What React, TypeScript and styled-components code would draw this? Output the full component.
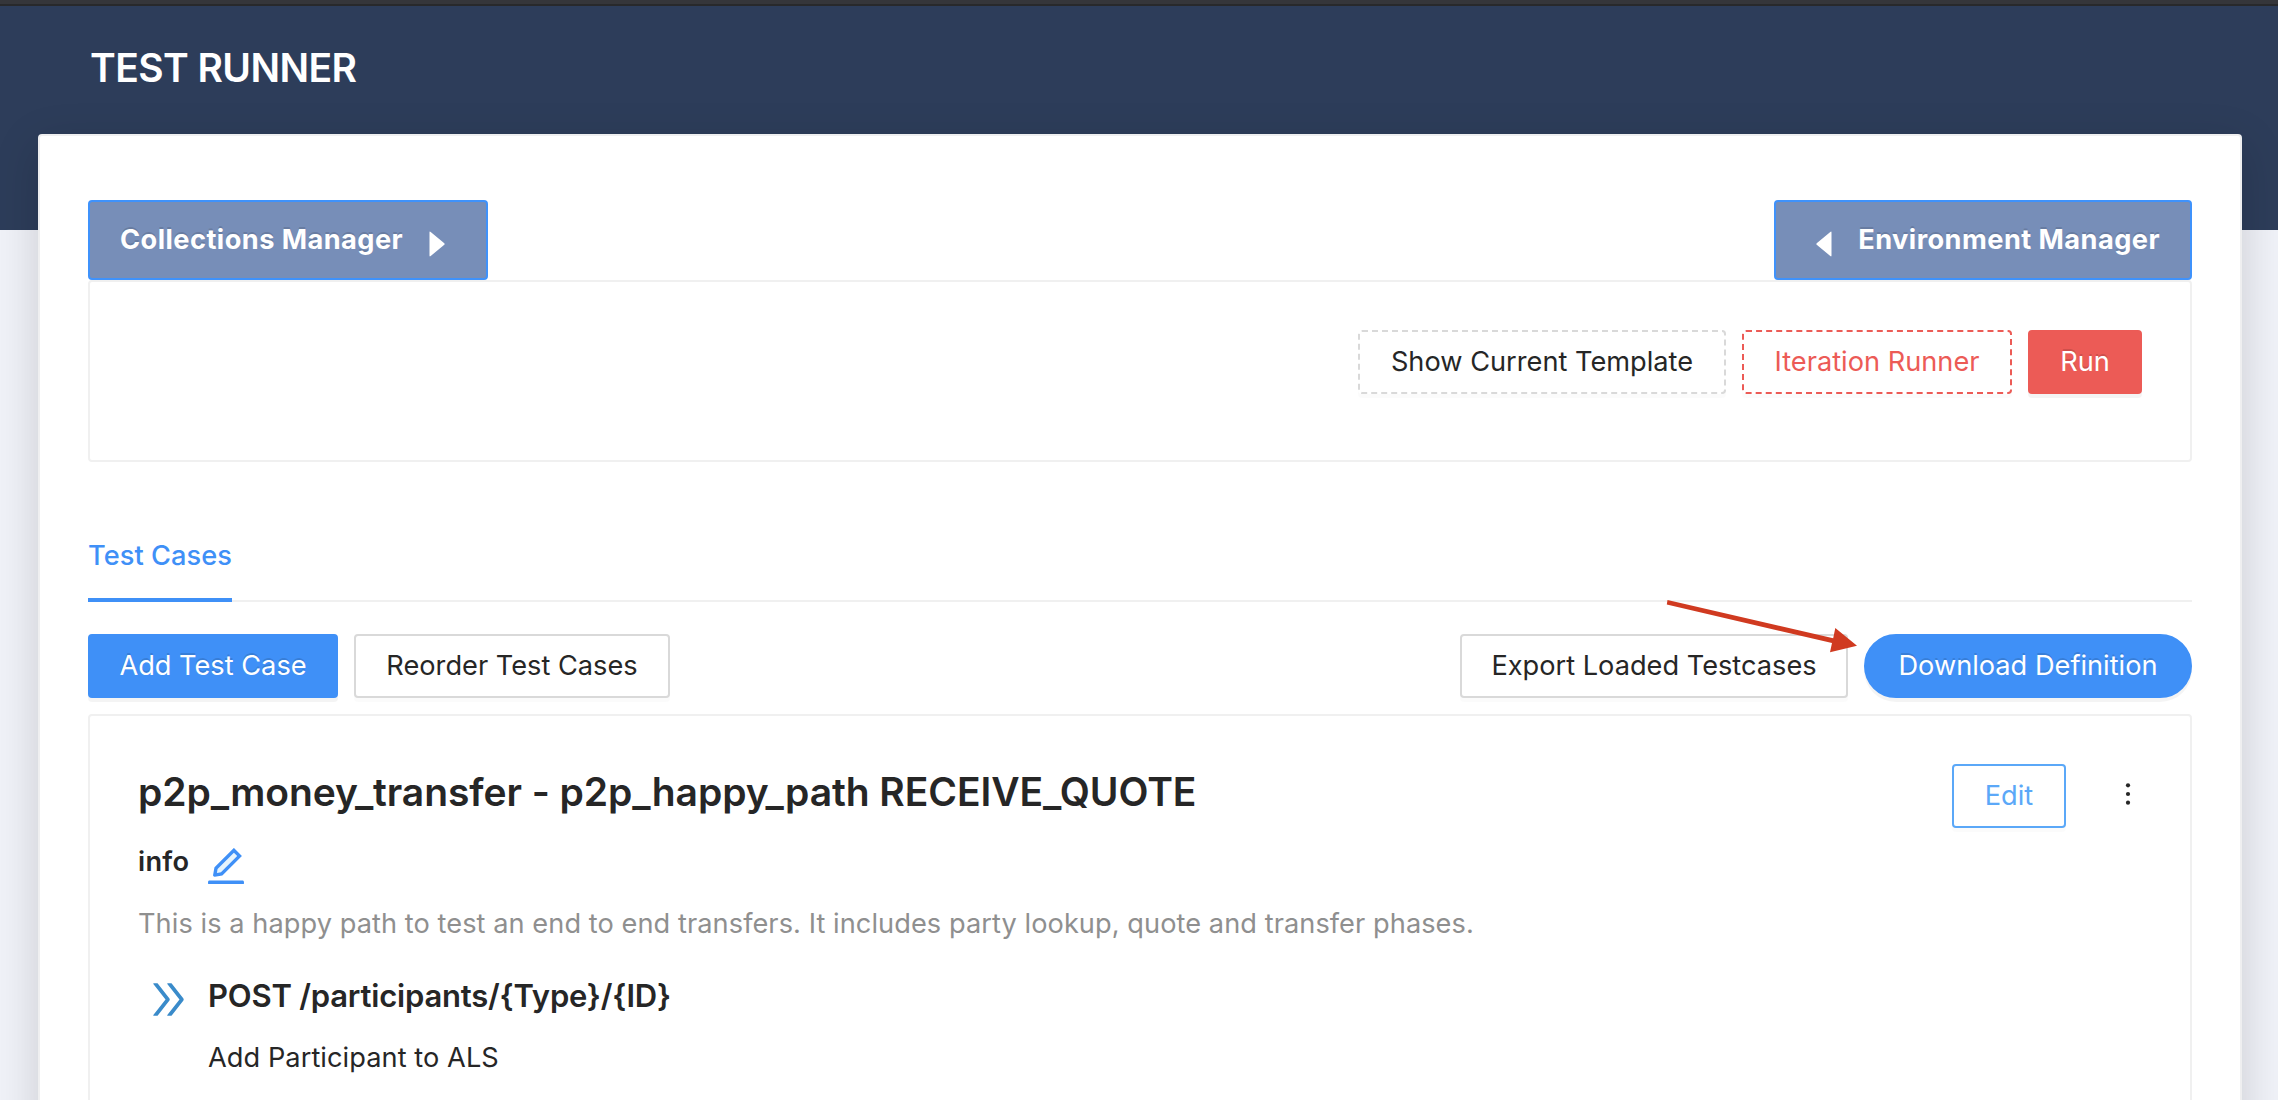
import React from "react";
import styled, { createGlobalStyle, css } from "styled-components";
import { AiOutlineDoubleRight, AiTwotoneEdit } from "react-icons/ai";

const color = {
  primary: "#3f90f7",
  danger: "#ec5b56",
  text: "#262626",
  muted: "#8f8f8f",
  line: "#f0f0f0",
  navy: "#2d3d5a",
};

const GlobalStyle = createGlobalStyle`
  *, *::before, *::after { box-sizing: border-box; }
  body {
    margin: 0;
    background: #f0f2f8;
    color: ${color.text};
    font-family: Inter, "Liberation Sans", sans-serif;
    font-size: 27.2px;
    line-height: 44px;
    letter-spacing: 0.06px;
  }
`;

const Page = styled.div`
  height: 1100px;
  overflow: hidden;
`;

const BrowserEdge = styled.div`
  height: 6px;
  background: #35363a;
  border-bottom: 2px solid #28292b;
`;

const Header = styled.header`
  height: 224px;
  padding: 36px 90px 0;
  background: ${color.navy};
`;

const PageTitle = styled.h1`
  margin: 0;
  color: #fff;
  font-size: 39px;
  font-weight: 600;
  line-height: 52px;
  letter-spacing: -0.58px;
`;

const Sheet = styled.main`
  position: relative;
  height: 1100px;
  margin: -96px 36px 0 38px;
  padding: 64px 48px 0;
  background: #fff;
  border: 2px solid #efeff0;
  border-radius: 4px;
  box-shadow: 0 12px 46px rgba(0, 0, 0, 0.16);
`;

const Row = styled.div<{ $gap?: number; $between?: boolean }>`
  display: flex;
  align-items: flex-start;
  justify-content: ${(p) => (p.$between ? "space-between" : "flex-start")};
  gap: ${(p) => p.$gap ?? 0}px;
`;

const ManagerButton = styled.button<{ $width: number; $end?: boolean }>`
  display: flex;
  align-items: center;
  justify-content: ${(p) => (p.$end ? "flex-end" : "flex-start")};
  gap: 26px;
  width: ${(p) => p.$width}px;
  height: 80px;
  padding: 0 30px;
  color: #fff;
  background: #778eb8;
  border: 2px solid #3f92fb;
  border-radius: 4px;
  font: inherit;
  font-weight: 700;
  letter-spacing: 0.45px;
  text-shadow: 0 -2px 0 rgba(0, 0, 0, 0.12);
`;

const Caret = styled.svg`
  width: 16px;
  height: 26px;
  margin-top: 8px;
  fill: #fff;
`;

type Kind = "default" | "dashed" | "dangerDashed" | "danger" | "primary" | "outline";

const kinds = {
  default: css`
    border-color: #d9d9d9;
  `,
  dashed: css`
    border: 2px dashed #d9d9d9;
  `,
  dangerDashed: css`
    color: ${color.danger};
    border: 2px dashed ${color.danger};
  `,
  danger: css`
    color: #fff;
    background: ${color.danger};
    border-color: ${color.danger};
    box-shadow: 0 4px 0 rgba(0, 0, 0, 0.045);
    text-shadow: 0 -2px 0 rgba(0, 0, 0, 0.12);
  `,
  primary: css`
    color: #fff;
    background: ${color.primary};
    border-color: ${color.primary};
    box-shadow: 0 4px 0 rgba(0, 0, 0, 0.045);
    text-shadow: 0 -2px 0 rgba(0, 0, 0, 0.12);
  `,
  outline: css`
    color: #5ba8f8;
    border-color: #5ba8f8;
  `,
};

const Button = styled.button<{ $kind: Kind; $width: number; $round?: boolean }>`
  flex: none;
  width: ${(p) => p.$width}px;
  height: 64px;
  padding: 0;
  color: ${color.text};
  background: #fff;
  border: 2px solid transparent;
  border-radius: ${(p) => (p.$round ? 32 : 4)}px;
  box-shadow: 0 4px 0 rgba(0, 0, 0, 0.016);
  font: inherit;
  letter-spacing: 0;
  text-align: center;
  white-space: nowrap;
  ${(p) => kinds[p.$kind]}
`;

const RunPanel = styled.section`
  display: flex;
  justify-content: flex-end;
  gap: 16px;
  height: 182px;
  padding: 48px;
  border: 2px solid ${color.line};
  border-radius: 4px;
`;

const TabBar = styled.nav`
  display: flex;
  margin: 48px 0 32px;
  box-shadow: inset 0 -2px 0 ${color.line};
`;

const Tab = styled.a`
  width: 144px;
  padding: 24px 0 20px;
  color: ${color.primary};
  border-bottom: 4px solid ${color.primary};
  font-weight: 500;
  white-space: nowrap;
`;

const CaseCard = styled.section`
  display: flex;
  justify-content: space-between;
  height: 600px;
  margin-top: 16px;
  padding: 48px;
  border: 2px solid ${color.line};
  border-radius: 4px;
`;

const CaseTitle = styled.h2`
  margin: 0 0 20px;
  font-size: 39px;
  font-weight: 600;
  line-height: 56px;
  letter-spacing: -0.07px;
`;

const InfoRow = styled.div`
  display: flex;
  gap: 14px;
  height: 44px;
  font-weight: 600;
  letter-spacing: 0.3px;
`;

const EditIcon = styled(AiTwotoneEdit)`
  width: 46px;
  height: 46px;
  margin-top: 3px;
  color: ${color.primary};

  path[fill="#D9D9D9"] {
    fill: #e6f4fd;
  }
`;

const Description = styled.p`
  margin: 18px 0 25px;
  color: ${color.muted};
`;

const Step = styled.div`
  display: grid;
  grid-template-columns: 63px 1fr;
  padding-left: 7px;
`;

const StepIcon = styled(AiOutlineDoubleRight)`
  width: 47px;
  height: 47px;
  margin-top: 5px;
  color: #3a8bca;
`;

const StepTitle = styled.h3`
  margin: 0 0 15px;
  font-size: 31px;
  font-weight: 600;
  line-height: 50px;
  letter-spacing: -0.2px;
`;

const StepText = styled.p`
  margin: 0;
`;

const More = styled.svg`
  width: 28px;
  height: 60px;
  fill: ${color.text};
`;

const Annotation = styled.svg`
  position: absolute;
  top: 460px;
  left: 1620px;
  width: 210px;
  height: 65px;
  fill: #d03a20;
`;

export default function App() {
  return (
    <Page>
      <GlobalStyle />
      <BrowserEdge />
      <Header>
        <PageTitle>TEST RUNNER</PageTitle>
      </Header>
      <Sheet>
        <Row $between>
          <ManagerButton $width={400}>
            Collections Manager
            <Caret viewBox="0 0 16 26">
              <path d="M0.5 1.4Q0.5 0 1.7 1L15.3 12.2Q16 13 15.3 13.8L1.7 25Q0.5 26 0.5 24.6Z" />
            </Caret>
          </ManagerButton>
          <ManagerButton $width={418} $end>
            <Caret viewBox="0 0 16 26">
              <path d="M15.5 1.4Q15.5 0 14.3 1L0.7 12.2Q0 13 0.7 13.8L14.3 25Q15.5 26 15.5 24.6Z" />
            </Caret>
            Environment Manager
          </ManagerButton>
        </Row>
        <RunPanel>
          <Button $kind="dashed" $width={368}>Show Current Template</Button>
          <Button $kind="dangerDashed" $width={270}>Iteration Runner</Button>
          <Button $kind="danger" $width={114}>Run</Button>
        </RunPanel>
        <TabBar>
          <Tab>Test Cases</Tab>
        </TabBar>
        <Row $between>
          <Row $gap={16}>
            <Button $kind="primary" $width={250}>Add Test Case</Button>
            <Button $kind="default" $width={316}>Reorder Test Cases</Button>
          </Row>
          <Row $gap={16}>
            <Button $kind="default" $width={388}>Export Loaded Testcases</Button>
            <Button $kind="primary" $width={328} $round>Download Definition</Button>
          </Row>
        </Row>
        <CaseCard>
          <div>
            <CaseTitle>p2p_money_transfer - p2p_happy_path RECEIVE_QUOTE</CaseTitle>
            <InfoRow>
              info
              <EditIcon />
            </InfoRow>
            <Description>
              This is a happy path to test an end to end transfers. It includes party lookup, quote and transfer phases.
            </Description>
            <Step>
              <StepIcon />
              <div>
                <StepTitle>POST /participants/&#123;Type&#125;/&#123;ID&#125;</StepTitle>
                <StepText>Add Participant to ALS</StepText>
              </div>
            </Step>
          </div>
          <Row $gap={48}>
            <Button $kind="outline" $width={114}>Edit</Button>
            <More viewBox="0 0 28 60">
              <circle cx="14" cy="21.3" r="2.1" />
              <circle cx="14" cy="30" r="2.1" />
              <circle cx="14" cy="38.7" r="2.1" />
            </More>
          </Row>
        </CaseCard>
        <Annotation viewBox="0 0 210 65">
          <path d="M7.5 4L173.2 42.3L175.3 32L197 49.7L170 56.3L172 47L6.8 8.6Z" />
        </Annotation>
      </Sheet>
    </Page>
  );
}
